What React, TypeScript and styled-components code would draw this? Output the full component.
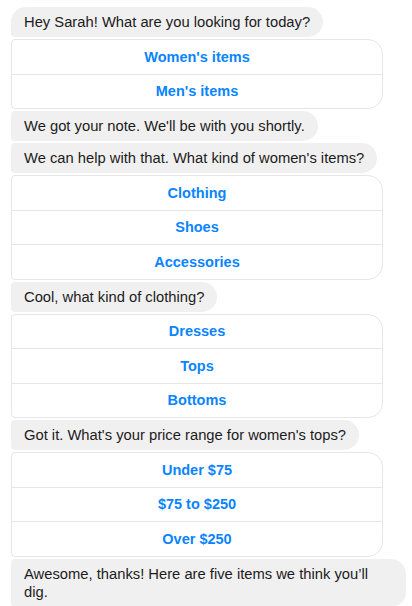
import styled, { createGlobalStyle } from 'styled-components';

const GlobalStyle = createGlobalStyle`
  html, body {
    margin: 0;
    padding: 0;
    background: #fff;
  }
  body {
    font-family: 'Liberation Sans', Arial, sans-serif;
    -webkit-font-smoothing: antialiased;
  }
`;

type Entry =
  | { kind: 'text'; text: string }
  | { kind: 'options'; options: string[] };

const thread: Entry[] = [
  { kind: 'text', text: 'Hey Sarah! What are you looking for today?' },
  { kind: 'options', options: ["Women's items", "Men's items"] },
  { kind: 'text', text: "We got your note. We'll be with you shortly." },
  { kind: 'text', text: "We can help with that. What kind of women's items?" },
  { kind: 'options', options: ['Clothing', 'Shoes', 'Accessories'] },
  { kind: 'text', text: 'Cool, what kind of clothing?' },
  { kind: 'options', options: ['Dresses', 'Tops', 'Bottoms'] },
  { kind: 'text', text: "Got it. What's your price range for women's tops?" },
  { kind: 'options', options: ['Under $75', '$75 to $250', 'Over $250'] },
  { kind: 'text', text: 'Awesome, thanks! Here are five items we think you’ll dig.' },
];

const Thread = styled.div`
  display: flex;
  flex-direction: column;
  align-items: flex-start;
  gap: 2px;
  padding: 7px 6px 0 11px;
`;

const Bubble = styled.div<{ $first?: boolean }>`
  max-width: 369px;
  padding: 6px 13px;
  background: #f1f0f0;
  color: #1c1c1c;
  font-size: 14.75px;
  line-height: 18px;
  border-radius: ${({ $first }) => ($first ? '15px 15px 15px 4px' : '4px 15px 15px 4px')};
`;

const OptionGroup = styled.div`
  width: 372px;
  box-sizing: border-box;
  display: flex;
  flex-direction: column;
  border: 1px solid #e6e6e6;
  border-radius: 4px 15px 15px 4px;
`;

const Option = styled.button`
  all: unset;
  height: 33.5px;
  display: flex;
  align-items: center;
  justify-content: center;
  color: #0a84ff;
  font-family: 'Liberation Sans', Arial, sans-serif;
  font-size: 14.5px;
  font-weight: bold;
  cursor: pointer;

  & + & {
    border-top: 1px solid #e6e6e6;
  }
`;

export default function App() {
  return (
    <>
      <GlobalStyle />
      <Thread>
        {thread.map((entry, idx) =>
          entry.kind === 'text' ? (
            <Bubble key={idx} $first={idx === 0}>
              {entry.text}
            </Bubble>
          ) : (
            <OptionGroup key={idx}>
              {entry.options.map((opt) => (
                <Option key={opt}>{opt}</Option>
              ))}
            </OptionGroup>
          ),
        )}
      </Thread>
    </>
  );
}
